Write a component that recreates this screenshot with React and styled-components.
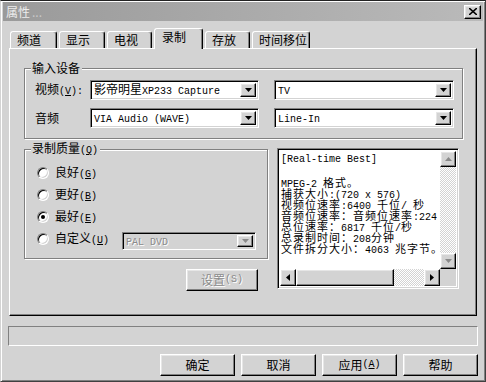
import React from "react";
import styled, { createGlobalStyle, css } from "styled-components";

const FACE = "#d3d3d3";

const GlobalStyle = createGlobalStyle`
  html, body {
    margin: 0;
    padding: 0;
    background: ${FACE};
  }
  body {
    font-family: "Noto Sans CJK SC", "Liberation Sans", sans-serif;
    font-size: 12px;
    color: #000;
  }
`;

// classic 3d edges
const raised = css`
  border: 1px solid;
  border-color: #fff #000 #000 #fff;
  box-shadow: inset -1px -1px #808080, inset 1px 1px #e6e6e6;
  background: ${FACE};
`;

const sunken = css`
  border: 1px solid;
  border-color: #808080 #fff #fff #808080;
  box-shadow: inset 1px 1px #000, inset -1px -1px ${FACE};
`;

const disabledText = css`
  color: #8a8a8a;
  text-shadow: 1px 1px #fff;
`;

const Latin = styled.span`
  font-family: "Liberation Mono", "DejaVu Sans Mono", monospace;
  font-size: 10px;
  letter-spacing: 0;
`;

// half width runs in the mono face, the rest in the CJK face
function Mixed({ text }) {
  return text.split(/([\x20-\x7e]+)/).map((part, i) =>
    /^[\x20-\x7e]+$/.test(part) ? <Latin key={i}>{part}</Latin> : part
  );
}

const Window = styled.div`
  width: 486px;
  height: 382px;
  box-sizing: border-box;
  border: 1px solid;
  border-color: #222 #404040 #404040 ${FACE};
  box-shadow: inset 1px 1px #fff, inset -1px -1px #808080;
  background: ${FACE};
  display: flex;
  flex-direction: column;
  overflow: hidden;
`;

const TitleBar = styled.div`
  height: 19px;
  margin: 1px 2px 0;
  padding: 0 2px 0 3px;
  background: linear-gradient(to right, #9a9a9a, #bababa);
  display: flex;
  align-items: center;
  justify-content: space-between;
`;

const Title = styled.span`
  color: #ececec;
  font-size: 12px;
  line-height: 14px;
`;

const Dots = styled.span`
  color: #c8c8c8;
  margin-left: 2px;
`;

const CloseButton = styled.div`
  ${raised};
  width: 15px;
  height: 12px;
  display: flex;
  align-items: center;
  justify-content: center;
`;

const TabStrip = styled.div`
  display: flex;
  align-items: flex-end;
  gap: 2px;
  height: 20px;
  margin-top: 7px;
  padding-left: 9px;
  position: relative;
  z-index: 1;
`;

const Tab = styled.div`
  box-sizing: border-box;
  width: ${(p) => p.w}px;
  height: ${(p) => (p.active ? 21 : 17)}px;
  margin-bottom: ${(p) => (p.active ? -1 : 0)}px;
  padding: ${(p) => (p.active ? "1px 0 0 7px" : "1px 0 0 6px")};
  border: 1px solid;
  border-bottom: none;
  border-color: #fff #000 transparent #fff;
  border-radius: 3px 3px 0 0;
  box-shadow: inset -1px 0 #808080;
  background: ${FACE};
  line-height: 14px;
  font-size: 12px;
`;

const TabPanel = styled.div`
  box-sizing: border-box;
  height: 268px;
  margin: 0 8px;
  padding: 12px 13px 0 14px;
  border: 1px solid;
  border-color: #fff #000 #000 #fff;
  box-shadow: inset -1px -1px #808080;
`;

const Group = styled.fieldset`
  margin: 0;
  padding: ${(p) => p.pad};
  border: 1px solid #808080;
  box-shadow: 1px 1px 0 #fff, inset 1px 1px 0 #fff;
  min-width: 0;
`;

const Legend = styled.legend`
  margin-left: ${(p) => p.offset}px;
  padding: 0 2px 0 1px;
  background: ${FACE};
  line-height: 14px;
  font-size: 12px;
`;

const DeviceRow = styled.div`
  display: flex;
  align-items: center;
  height: 20px;
  & + & {
    margin-top: 8px;
  }
`;

const RowLabel = styled.span`
  width: 55px;
  line-height: 14px;
`;

const Combo = styled.div`
  ${sunken};
  box-sizing: border-box;
  width: ${(p) => p.w}px;
  height: ${(p) => p.h || 20}px;
  margin-left: ${(p) => p.ml || 0}px;
  padding: 2px 2px 2px 3px;
  background: ${(p) => (p.disabled ? FACE : "#fff")};
  display: flex;
  align-items: center;
  justify-content: space-between;
  gap: 2px;
`;

const ComboText = styled.span`
  line-height: 14px;
  white-space: nowrap;
  ${(p) => p.disabled && disabledText};
`;

const DropButton = styled.div`
  ${raised};
  box-sizing: border-box;
  flex: none;
  width: 16px;
  height: 100%;
  display: flex;
  align-items: center;
  justify-content: center;
`;

const Arrow = ({ dir = "down", color = "#000" }) => {
  const pts = {
    down: "0,0 7,0 3.5,4",
    up: "0,4 7,4 3.5,0",
    left: "4,0 4,7 0,3.5",
    right: "0,0 0,7 4,3.5",
  }[dir];
  const vert = dir === "up" || dir === "down";
  return (
    <svg width={vert ? 7 : 4} height={vert ? 4 : 7} viewBox={vert ? "0 0 7 4" : "0 0 4 7"}>
      <polygon points={pts} fill={color} />
    </svg>
  );
};

const LowerRow = styled.div`
  display: flex;
  align-items: flex-start;
  gap: 9px;
  margin-top: 2px;
`;

const LeftColumn = styled.div`
  width: 244px;
  display: flex;
  flex-direction: column;
`;

const RadioRow = styled.div`
  display: flex;
  align-items: center;
  height: 22px;
`;

const RadioDot = styled.span`
  ${sunken};
  box-sizing: border-box;
  width: 12px;
  height: 12px;
  border-radius: 50%;
  background: #fff;
  margin-right: 6px;
  display: flex;
  align-items: center;
  justify-content: center;
  &::after {
    content: "";
    width: 4px;
    height: 4px;
    border-radius: 50%;
    background: ${(p) => (p.checked ? "#000" : "transparent")};
  }
`;

const RadioLabel = styled.span`
  line-height: 14px;
`;

const CustomCombo = styled(Combo)`
  margin-left: auto;
  margin-top: 4px;
`;

const PushButton = styled.div`
  ${raised};
  box-sizing: border-box;
  width: ${(p) => p.w}px;
  height: ${(p) => p.h || 22}px;
  display: flex;
  align-items: center;
  justify-content: center;
  line-height: 14px;
  ${(p) => p.disabled && disabledText};
`;

const SettingsButton = styled(PushButton)`
  align-self: flex-end;
  margin: 10px 10px 0 0;
`;

const InfoBox = styled.div`
  ${sunken};
  box-sizing: border-box;
  width: 182px;
  height: 141px;
  margin-top: 7px;
  padding: 2px;
  background: #fff;
  display: grid;
  grid-template-columns: 1fr 16px;
  grid-template-rows: 1fr 17px;
`;

const InfoText = styled.div`
  padding: 1px 0 0 1px;
  overflow: hidden;
  white-space: pre;
  font-size: 11px;
  letter-spacing: 1px;
`;

const InfoLine = styled.div`
  height: ${(p) => p.h || 11}px;
  line-height: 11px;
  & > span {
    line-height: 11px;
  }
`;

const dither = css`
  background: repeating-conic-gradient(#fff 0 25%, ${FACE} 0 50%) 0 0 / 2px 2px;
`;

const VScroll = styled.div`
  display: flex;
  flex-direction: column;
  ${dither};
`;

const HScroll = styled.div`
  display: flex;
  ${dither};
`;

const ScrollButton = styled.div`
  ${raised};
  box-sizing: border-box;
  flex: none;
  width: 16px;
  height: ${(p) => p.h || 16}px;
  display: flex;
  align-items: center;
  justify-content: center;
`;

const Track = styled.div`
  flex: 1;
`;

const Thumb = styled.div`
  ${raised};
  box-sizing: border-box;
  width: 98px;
`;

const Corner = styled.div`
  background: ${FACE};
`;

const StatusBar = styled.div`
  height: 18px;
  margin: 10px 7px 0;
  border: 1px solid;
  border-color: #808080 #fff #fff #808080;
`;

const ButtonRow = styled.div`
  display: flex;
  justify-content: flex-end;
  gap: 6px;
  margin: 8px 7px 0;
`;

const Key = styled.span`
  text-decoration: underline;
`;

const tabs = [
  { name: "频道", w: 47 },
  { name: "显示", w: 46 },
  { name: "电视", w: 45 },
  { name: "录制", w: 49, active: true },
  { name: "存放", w: 45 },
  { name: "时间移位", w: 58 },
];

const info = [
  "MPEG-2 格式。",
  "捕获大小:(720 x 576)",
  "视频位速率:6400 千位/ 秒",
  "音频位速率：音频位速率:224",
  "总位速率：6817 千位/秒",
  "总录制时间：208分钟",
  "文件拆分大小：4063 兆字节。",
];

const qualities = [
  { label: "良好", key: "G" },
  { label: "更好", key: "B" },
  { label: "最好", key: "E", checked: true },
];

export default function App() {
  return (
    <>
      <GlobalStyle />
      <Window>
        <TitleBar>
          <Title>
            属性<Dots>...</Dots>
          </Title>
          <CloseButton>
            <svg width="8" height="7" viewBox="0 0 8 7">
              <path d="M0 0 L8 7 M8 0 L0 7" stroke="#000" strokeWidth="1.6" />
            </svg>
          </CloseButton>
        </TitleBar>

        <TabStrip>
          {tabs.map((t) => (
            <Tab key={t.name} w={t.w} active={t.active}>
              {t.name}
            </Tab>
          ))}
        </TabStrip>

        <TabPanel>
          <Group pad="5px 8px 10px 10px">
            <Legend offset={-4}>输入设备</Legend>
            <DeviceRow>
              <RowLabel>
                视频<Latin>(<Key>V</Key>):</Latin>
              </RowLabel>
              <Combo w={169}>
                <ComboText>
                  <Mixed text="影帝明星XP233 Capture" />
                </ComboText>
                <DropButton>
                  <Arrow />
                </DropButton>
              </Combo>
              <Combo w={180} ml={15}>
                <ComboText>
                  <Latin>TV</Latin>
                </ComboText>
                <DropButton>
                  <Arrow />
                </DropButton>
              </Combo>
            </DeviceRow>
            <DeviceRow>
              <RowLabel>音频</RowLabel>
              <Combo w={169}>
                <ComboText>
                  <Latin>VIA Audio (WAVE)</Latin>
                </ComboText>
                <DropButton>
                  <Arrow />
                </DropButton>
              </Combo>
              <Combo w={180} ml={15}>
                <ComboText>
                  <Latin>Line-In</Latin>
                </ComboText>
                <DropButton>
                  <Arrow />
                </DropButton>
              </Combo>
            </DeviceRow>
          </Group>

          <LowerRow>
            <LeftColumn>
              <Group pad="4px 11px 8px 12px">
                <Legend offset={-6}>
                  录制质量<Latin>(<Key>Q</Key>)</Latin>
                </Legend>
                {qualities.map((q) => (
                  <RadioRow key={q.key}>
                    <RadioDot checked={q.checked} />
                    <RadioLabel>
                      {q.label}
                      <Latin>
                        (<Key>{q.key}</Key>)
                      </Latin>
                    </RadioLabel>
                  </RadioRow>
                ))}
                <RadioRow>
                  <RadioDot />
                  <RadioLabel>
                    自定义<Latin>(<Key>U</Key>)</Latin>
                  </RadioLabel>
                  <CustomCombo w={134} h={18} disabled>
                    <ComboText disabled>
                      <Latin>PAL DVD</Latin>
                    </ComboText>
                    <DropButton>
                      <Arrow color="#8a8a8a" />
                    </DropButton>
                  </CustomCombo>
                </RadioRow>
              </Group>
              <SettingsButton w={72} disabled>
                设置<Latin>(S)</Latin>
              </SettingsButton>
            </LeftColumn>

            <InfoBox>
              <InfoText>
                <InfoLine h={25}>
                  <Latin>[Real-time Best]</Latin>
                </InfoLine>
                {info.map((line) => (
                  <InfoLine key={line}>
                    <Mixed text={line} />
                  </InfoLine>
                ))}
              </InfoText>
              <VScroll>
                <ScrollButton>
                  <Arrow dir="up" color="#8a8a8a" />
                </ScrollButton>
                <Track />
                <ScrollButton>
                  <Arrow dir="down" color="#8a8a8a" />
                </ScrollButton>
              </VScroll>
              <HScroll>
                <ScrollButton h={17}>
                  <Arrow dir="left" />
                </ScrollButton>
                <Thumb />
                <Track />
                <ScrollButton h={17}>
                  <Arrow dir="right" />
                </ScrollButton>
              </HScroll>
              <Corner />
            </InfoBox>
          </LowerRow>
        </TabPanel>

        <StatusBar />

        <ButtonRow>
          <PushButton w={75}>确定</PushButton>
          <PushButton w={75}>取消</PushButton>
          <PushButton w={75}>
            应用<Latin>(<Key>A</Key>)</Latin>
          </PushButton>
          <PushButton w={75}>帮助</PushButton>
        </ButtonRow>
      </Window>
    </>
  );
}
